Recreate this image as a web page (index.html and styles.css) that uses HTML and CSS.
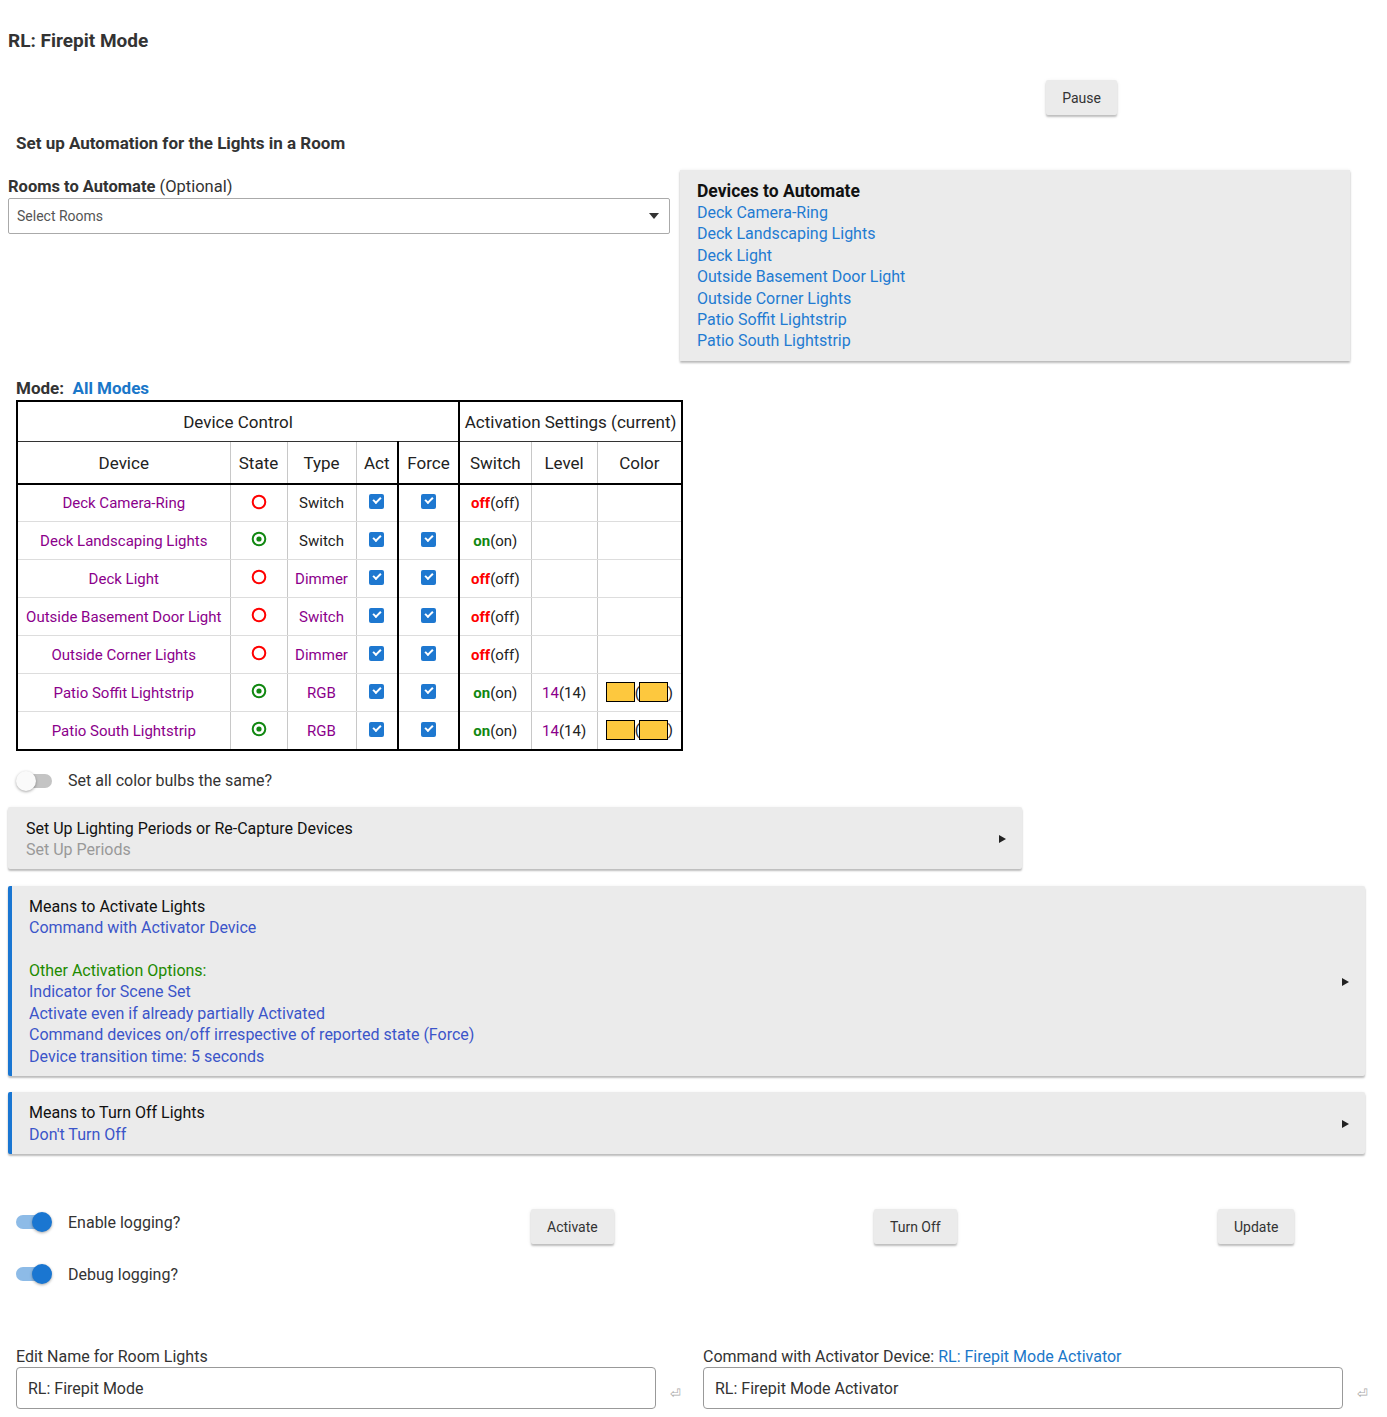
FILE: index.html
```html
<!DOCTYPE html>
<html>
<head>
<meta charset="utf-8">
<link rel="stylesheet" href="styles.css">
</head>
<body>
<div class="page">
  <h1 class="title">RL: Firepit Mode</h1>
  <div class="toolbar"><button class="btn">Pause</button></div>

  <h2 class="subtitle">Set up Automation for the Lights in a Room</h2>

  <div class="top-grid">
    <div class="rooms">
      <div class="rooms-label"><b>Rooms to Automate</b> (Optional)</div>
      <div class="select">
        <span>Select Rooms</span>
        <span class="caret"></span>
      </div>
    </div>
    <div class="devices-box">
      <div class="devices-title">Devices to Automate</div>
      <div class="dev-link">Deck Camera-Ring</div>
      <div class="dev-link">Deck Landscaping Lights</div>
      <div class="dev-link">Deck Light</div>
      <div class="dev-link">Outside Basement Door Light</div>
      <div class="dev-link">Outside Corner Lights</div>
      <div class="dev-link">Patio Soffit Lightstrip</div>
      <div class="dev-link">Patio South Lightstrip</div>
    </div>
  </div>

  <div class="mode"><b>Mode:</b>&nbsp; <span class="mode-val">All Modes</span></div>

  <table class="dtable">
    <colgroup>
      <col style="width:213px"><col style="width:57px"><col style="width:69px"><col style="width:42px">
      <col style="width:61px"><col style="width:72px"><col style="width:66px"><col style="width:85px">
    </colgroup>
    <thead>
      <tr class="h1">
        <th colspan="5" class="thick-r">Device Control</th>
        <th colspan="3">Activation Settings (current)</th>
      </tr>
      <tr class="h2">
        <th>Device</th><th>State</th><th>Type</th><th class="thick-r">Act</th><th class="thick-r">Force</th>
        <th>Switch</th><th>Level</th><th>Color</th>
      </tr>
    </thead>
    <tbody>
      <tr>
        <td class="dn">Deck Camera-Ring</td>
        <td><svg class="st" viewBox="0 0 16 16"><circle cx="8" cy="8" r="6.3" fill="none" stroke="#ff0000" stroke-width="2"/></svg></td>
        <td>Switch</td>
        <td class="thick-r"><span class="cb"></span></td>
        <td class="thick-r"><span class="cb"></span></td>
        <td><b class="off">off</b>(off)</td><td></td><td></td>
      </tr>
      <tr>
        <td class="dn">Deck Landscaping Lights</td>
        <td><svg class="st" viewBox="0 0 16 16"><circle cx="8" cy="8" r="6.3" fill="none" stroke="#118811" stroke-width="2"/><circle cx="8" cy="8" r="2.6" fill="#118811"/></svg></td>
        <td>Switch</td>
        <td class="thick-r"><span class="cb"></span></td>
        <td class="thick-r"><span class="cb"></span></td>
        <td><b class="on">on</b>(on)</td><td></td><td></td>
      </tr>
      <tr>
        <td class="dn">Deck Light</td>
        <td><svg class="st" viewBox="0 0 16 16"><circle cx="8" cy="8" r="6.3" fill="none" stroke="#ff0000" stroke-width="2"/></svg></td>
        <td class="pu">Dimmer</td>
        <td class="thick-r"><span class="cb"></span></td>
        <td class="thick-r"><span class="cb"></span></td>
        <td><b class="off">off</b>(off)</td><td></td><td></td>
      </tr>
      <tr>
        <td class="dn">Outside Basement Door Light</td>
        <td><svg class="st" viewBox="0 0 16 16"><circle cx="8" cy="8" r="6.3" fill="none" stroke="#ff0000" stroke-width="2"/></svg></td>
        <td class="pu">Switch</td>
        <td class="thick-r"><span class="cb"></span></td>
        <td class="thick-r"><span class="cb"></span></td>
        <td><b class="off">off</b>(off)</td><td></td><td></td>
      </tr>
      <tr>
        <td class="dn">Outside Corner Lights</td>
        <td><svg class="st" viewBox="0 0 16 16"><circle cx="8" cy="8" r="6.3" fill="none" stroke="#ff0000" stroke-width="2"/></svg></td>
        <td class="pu">Dimmer</td>
        <td class="thick-r"><span class="cb"></span></td>
        <td class="thick-r"><span class="cb"></span></td>
        <td><b class="off">off</b>(off)</td><td></td><td></td>
      </tr>
      <tr>
        <td class="dn">Patio Soffit Lightstrip</td>
        <td><svg class="st" viewBox="0 0 16 16"><circle cx="8" cy="8" r="6.3" fill="none" stroke="#118811" stroke-width="2"/><circle cx="8" cy="8" r="2.6" fill="#118811"/></svg></td>
        <td class="pu">RGB</td>
        <td class="thick-r"><span class="cb"></span></td>
        <td class="thick-r"><span class="cb"></span></td>
        <td><b class="on">on</b>(on)</td><td><span class="pu">14</span>(14)</td>
        <td class="colorcell"><span class="sw"></span>(<span class="sw sw2"></span>)</td>
      </tr>
      <tr>
        <td class="dn">Patio South Lightstrip</td>
        <td><svg class="st" viewBox="0 0 16 16"><circle cx="8" cy="8" r="6.3" fill="none" stroke="#118811" stroke-width="2"/><circle cx="8" cy="8" r="2.6" fill="#118811"/></svg></td>
        <td class="pu">RGB</td>
        <td class="thick-r"><span class="cb"></span></td>
        <td class="thick-r"><span class="cb"></span></td>
        <td><b class="on">on</b>(on)</td><td><span class="pu">14</span>(14)</td>
        <td class="colorcell"><span class="sw"></span>(<span class="sw sw2"></span>)</td>
      </tr>
    </tbody>
  </table>

  <div class="toggle-row first">
    <span class="toggle"><span class="track"></span><span class="knob"></span></span>
    <span class="toggle-label">Set all color bulbs the same?</span>
  </div>

  <div class="section narrow">
    <div class="sec-body">
      <div class="sec-title">Set Up Lighting Periods or Re-Capture Devices</div>
      <div class="sec-gray">Set Up Periods</div>
    </div>
    <span class="sec-arrow"></span>
  </div>

  <div class="section wide accent s2">
    <div class="sec-body">
      <div class="sec-title">Means to Activate Lights</div>
      <div class="sec-link">Command with Activator Device</div>
      <div class="sec-blank"></div>
      <div class="sec-green">Other Activation Options:</div>
      <div class="sec-link">Indicator for Scene Set</div>
      <div class="sec-link">Activate even if already partially Activated</div>
      <div class="sec-link">Command devices on/off irrespective of reported state (Force)</div>
      <div class="sec-link">Device transition time: 5 seconds</div>
    </div>
    <span class="sec-arrow"></span>
  </div>

  <div class="section wide accent s3">
    <div class="sec-body">
      <div class="sec-title">Means to Turn Off Lights</div>
      <div class="sec-link">Don't Turn Off</div>
    </div>
    <span class="sec-arrow"></span>
  </div>

  <div class="bottom-grid">
    <div class="toggles">
      <div class="toggle-row">
        <span class="toggle on"><span class="track"></span><span class="knob"></span></span>
        <span class="toggle-label">Enable logging?</span>
      </div>
      <div class="toggle-row">
        <span class="toggle on"><span class="track"></span><span class="knob"></span></span>
        <span class="toggle-label">Debug logging?</span>
      </div>
    </div>
    <div class="bcell"><button class="btn">Activate</button></div>
    <div class="bcell"><button class="btn">Turn Off</button></div>
    <div class="bcell"><button class="btn">Update</button></div>
  </div>

  <div class="inputs">
    <div class="field">
      <div class="field-label">Edit Name for Room Lights</div>
      <div class="field-row">
        <div class="input">RL: Firepit Mode</div>
        <span class="ret">⏎</span>
      </div>
    </div>
    <div class="field">
      <div class="field-label">Command with Activator Device: <span class="flink">RL: Firepit Mode Activator</span></div>
      <div class="field-row">
        <div class="input">RL: Firepit Mode Activator</div>
        <span class="ret">⏎</span>
      </div>
    </div>
  </div>
</div>
</body>
</html>
```

FILE: styles.css
```css
* { box-sizing: border-box; }
html, body { margin: 0; padding: 0; background: #fff; }
body { font-family: Roboto, "Noto Sans", "Liberation Sans", sans-serif; color: #222; }
.page { padding: 0 8px; width: 1387px; }

.title { font-size: 19px; font-weight: 700; color: #333; margin: 0; padding-top: 30px; line-height: 21px; }

.toolbar { display: flex; justify-content: flex-end; padding-right: 262px; margin-top: 29px; }
.btn {
  font-family: Roboto, "Liberation Sans", sans-serif; font-size: 14px; color: #333;
  background: #ebebeb; border: none; border-radius: 2px; height: 35px; padding: 0 16px;
  box-shadow: 0 2px 2px rgba(0,0,0,0.22), 0 1px 4px rgba(0,0,0,0.08);
}

.subtitle { font-size: 17px; font-weight: 700; color: #333; margin: 0; padding-left: 8px; margin-top: 19px; line-height: 19px; }

.top-grid { display: grid; grid-template-columns: 662px 670px; column-gap: 10px; margin-top: 17px; align-items: start; }
.rooms { padding-top: 7px; }
.rooms-label { font-size: 16.5px; color: #333; line-height: 19px; }
.rooms-label b { font-weight: 700; }
.select {
  margin-top: 2px; height: 36px; border: 1px solid #aaa; border-radius: 2px;
  display: flex; align-items: center; justify-content: space-between; padding: 0 10px 0 8px;
  font-size: 14px; color: #555;
}
.caret { width: 0; height: 0; border-left: 5px solid transparent; border-right: 5px solid transparent; border-top: 6px solid #333; }

.devices-box {
  background: #ebebeb; padding: 10px 17px 9px; 
  box-shadow: 0 2px 2px rgba(0,0,0,0.25), 0 0 3px rgba(0,0,0,0.08);
  font-size: 16px; line-height: 21.4px;
}
.devices-title { font-weight: 700; color: #111; font-size: 17.5px; line-height: 22px; }
.dev-link { color: #1f7bd2; }

.mode { font-size: 17px; color: #333; padding-left: 8px; margin-top: 18px; line-height: 19px; }
.mode b { font-weight: 700; }
.mode-val { color: #1a77c9; font-weight: 700; }

.dtable { margin: 2px 0 0 8px; border-collapse: collapse; table-layout: fixed; width: 665px; border: 2px solid #000; font-size: 15px; }
.dtable th { font-weight: 400; font-size: 17px; color: #222; text-align: center; padding: 0; }
.dtable tr.h1 th { height: 41px; border-bottom: 1px solid #333; }
.dtable tr.h2 th { height: 42px; border-bottom: 2px solid #000; border-right: 1px solid #c8c8c8; }
.dtable td { height: 38px; text-align: center; padding: 0; border-bottom: 1px solid #ddd; border-right: 1px solid #c8c8c8; color: #222; }
.dtable .thick-r, .dtable tr.h2 th.thick-r { border-right: 2px solid #000; }
.dtable td.dn { color: #8b008b; }
.dtable .pu { color: #8b008b; }
.off { color: #ff0000; font-weight: 700; }
.on { color: #118811; font-weight: 700; }
.st { width: 16px; height: 16px; display: inline-block; vertical-align: middle; margin-top: -5px; }
.cb {
  display: inline-block; width: 15px; height: 15px; background: #1e78d0; border-radius: 2px; vertical-align: middle; margin-top: -5px;
  position: relative;
}
.cb::after {
  content: ""; position: absolute; left: 4px; top: 3px; width: 6px; height: 3px;
  border-left: 2px solid #fff; border-bottom: 2px solid #fff; transform: rotate(-45deg);
}
.colorcell { white-space: nowrap; }
.sw { display: inline-block; width: 29px; height: 20px; background: #fdc83e; border: 1px solid #000; vertical-align: middle; margin-top: -3px; }
.sw2 { margin-left: -1px; }

.toggle-row { display: flex; align-items: center; height: 24px; }
.toggle-row.first { margin-top: 18px; margin-left: 8px; }
.toggle { position: relative; width: 36px; height: 20px; display: inline-block; margin-right: 16px; }
.toggle .track { position: absolute; left: 2px; top: 3px; width: 34px; height: 14px; border-radius: 7px; background: #c4c4c4; }
.toggle .knob { position: absolute; left: 0; top: 0; width: 20px; height: 20px; border-radius: 50%; background: #fafafa; box-shadow: 0 1px 3px rgba(0,0,0,0.35); }
.toggle.on .track { left: 0; background: #8dbbe7; }
.toggle.on .knob { left: 16px; background: #1a76d1; }
.toggle-label { font-size: 16px; color: #333; }

.section {
  display: flex; align-items: center; background: #ebebeb; border-radius: 2px;
  box-shadow: 0 2px 2px rgba(0,0,0,0.25), 0 0 3px rgba(0,0,0,0.06);
  font-size: 16px; line-height: 21.5px;
}
.section.narrow { width: 1014px; margin-top: 14px; padding: 11px 16px 8px 18px; }
.section.wide { width: 1357px; padding: 10px 16px 9px 17px; }
.section.s2 { margin-top: 17px; }
.section.s3 { margin-top: 16px; }
.section.accent { border-left: 4px solid #1976d2; padding-left: 17px; }
.sec-body { flex: 1; }
.sec-title { color: #111; }
.sec-gray { color: #999; }
.sec-link { color: #3b55c9; }
.sec-green { color: #1d8a00; }
.sec-blank { height: 21px; }
.sec-arrow { width: 0; height: 0; border-top: 4px solid transparent; border-bottom: 4px solid transparent; border-left: 7px solid #222; }

.bottom-grid { display: grid; grid-template-columns: 515px 343px 344px 1fr; margin-top: 55px; padding-left: 8px; }
.toggles { display: flex; flex-direction: column; gap: 28px; padding-top: 1px; }
.bcell { display: flex; align-items: flex-start; }

.inputs { display: grid; grid-template-columns: 687px 1fr; margin-top: 61px; padding-left: 8px; }
.field-label { font-size: 16px; color: #333; line-height: 19px; }
.flink { color: #1a77c9; }
.field-row { display: flex; align-items: flex-end; margin-top: 1px; }
.input { width: 640px; height: 42px; border: 1px solid #999; border-radius: 4px; padding: 0 11px; display: flex; align-items: center; font-size: 16px; color: #333; }
.ret { font-size: 13px; color: #aaa; margin-left: 14px; margin-bottom: 9px; line-height: 13px; }
```
